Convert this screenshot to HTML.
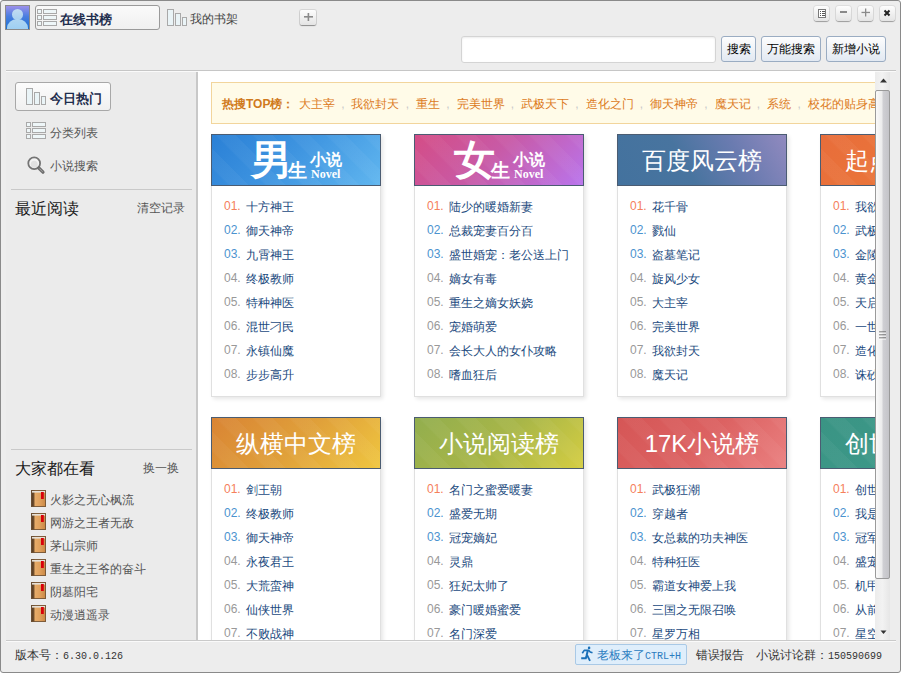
<!DOCTYPE html>
<html><head><meta charset="utf-8">
<style>
*{margin:0;padding:0;box-sizing:border-box}
html,body{width:901px;height:673px;overflow:hidden;background:#fff}
body{font-family:"Liberation Sans",sans-serif;font-size:12px;position:relative}
.win{position:absolute;left:0;top:0;width:901px;height:673px;background:#ededed;border:1px solid #8a8a8a;border-radius:3px;overflow:hidden}
.abs{position:absolute}
.avatar{left:4px;top:4px;width:25px;height:25px;border:1px solid #8a8a8a;background:linear-gradient(#9c90ea,#4a7ee0 45%,#1a70d0);overflow:hidden}
.avatar .hd1{position:absolute;left:5.5px;top:3px;width:11.5px;height:11px;border-radius:50%;background:linear-gradient(#c2dcf2,#a8d0f0)}
.avatar .bd1{position:absolute;left:1px;top:13px;width:21px;height:18px;border-radius:10px 10px 0 0/9px 9px 0 0;background:linear-gradient(#b0d6f2,#8fcaf5)}
.tab1{left:34px;top:4px;width:125px;height:25px;border:1px solid #9a9a9a;border-radius:3px;background:linear-gradient(#fafafa,#f0f0f0)}
.tabtxt{font-weight:bold;color:#1e2d4d;font-size:13px;line-height:15px}
.graytxt{color:#444}
.ctl{top:5px;width:15px;height:15px;border-radius:3px;background:linear-gradient(#fdfdfd,#e4e4e4);box-shadow:0 1px 1px rgba(0,0,0,.3),0 0 0 1px #dedede;}
.ctl svg{position:absolute;left:0;top:0}
.plusbtn{left:299px;top:9px;width:16px;height:15px;border-radius:2px;background:linear-gradient(#fdfdfd,#e4e4e4);box-shadow:0 1px 1px rgba(0,0,0,.35),0 0 0 1px #d6d6d6}
.search{left:460px;top:35px;width:255px;height:27px;border:1px solid #d4d4d4;border-radius:3px;background:#fff;box-shadow:inset 0 1px 2px rgba(0,0,0,.08)}
.btn{top:35px;height:26px;border:1px solid #9aacc2;border-radius:3px;background:linear-gradient(#fdfdfd,#e2e9f2);color:#000;font-size:12px;line-height:25px;text-align:center}
.hline{left:5px;top:69px;width:890px;height:1px;background:#c6c6c6}
.hline2{left:5px;top:70px;width:890px;height:1px;background:#fafafa}
.side{left:5px;top:71px;width:190px;height:568px;background:#ebebeb}
.vsep{left:195px;top:71px;width:2px;height:568px;background:#c8c8c8}
.content{left:197px;top:70px;width:677px;height:569px;background:#fff;overflow:hidden}
.sb{left:874px;top:71px;width:15px;height:568px;background:linear-gradient(90deg,#ececec,#f2f2f2 50%,#e6e6e6)}
.thumb{left:0px;top:18px;width:15px;height:489px;border:1px solid #9a9a9a;border-radius:2px;background:linear-gradient(90deg,#fafafa,#ececec 45%,#cfcfd3 55%,#c4c4c8)}
.sline{left:5px;top:639px;width:890px;height:1px;background:#cacaca}
.sline2{left:5px;top:640px;width:890px;height:1px;background:#fafafa}
.sbtn{left:14px;top:81px;width:96px;height:29px;border:1px solid #a8a8a8;border-radius:3px;background:linear-gradient(#fcfcfc,#f0f0f0)}
.sdiv{left:10px;width:181px;height:1px;background:#c9c9c9}
.bigt{font-size:16px;color:#1a1a1a;line-height:18px}
.smt{font-size:12px;color:#555;line-height:14px}
.bk{position:absolute;left:30px;height:17px;width:160px}
.bsvg{position:absolute;left:0;top:0}
.btx{position:absolute;left:19px;top:3px;color:#555;font-size:12px;line-height:14px;white-space:nowrap}
.hot{left:13px;top:11px;width:700px;height:42px;border:1px solid #f2d59c;background:#fffbe8}
.hotin{position:absolute;left:10px;top:14px;white-space:nowrap;color:#d9822b;font-size:12px;line-height:14px}
.hotin b{color:#d07a1c}
.hw{color:#dc7a22}
.cm{color:#c8c8c8;display:inline-block;margin:0 7px 0 6.2px}
.card{position:absolute;width:170px;height:263px;box-shadow:2px 2px 4px rgba(0,0,0,.10)}
.hd{position:absolute;left:0;top:0;width:170px;height:52px;border:1px solid #4b5c72;color:#fff;overflow:hidden}
.stripes{position:absolute;left:0;top:0;width:168px;height:50px;background:repeating-linear-gradient(45deg,rgba(255,255,255,0) 0 11px,rgba(255,255,255,.04) 13px 26px)}
.ht{position:absolute;left:0;top:1px;width:168px;text-align:center;font-size:24px;line-height:50px}
.h1{background:linear-gradient(135deg,#2a80d6 0%,#3e94e0 45%,#60b6ef 100%)}
.h2{background:linear-gradient(135deg,#d44d86 0%,#c85aa6 45%,#b974ec 100%)}
.h3{background:linear-gradient(60deg,#43729e 0%,#48749f 40%,#6a7bb0 70%,#918abf 100%)}
.h3 .stripes{display:none}
.h4{background:linear-gradient(135deg,#e86d3a 0%,#ea763a 60%,#ee8a3a 100%)}
.h5{background:linear-gradient(135deg,#d98434 0%,#e0a03a 50%,#efc640 100%)}
.h6{background:linear-gradient(135deg,#92ae4e 0%,#a8b648 50%,#d4cd42 100%)}
.h7{background:linear-gradient(135deg,#d55656 0%,#dc6262 50%,#ea8080 100%)}
.h8{background:linear-gradient(135deg,#3a9484 0%,#3c9888 50%,#48a898 100%)}
.lg1{position:absolute;left:39px;top:2px;font-family:"Liberation Serif",serif;font-weight:bold;font-size:41px;line-height:46px}
.lg2{position:absolute;left:76px;top:25px;font-weight:bold;font-size:19px;line-height:22px}
.lg3{position:absolute;left:98px;top:16px;font-weight:bold;font-size:16px;line-height:18px}
.lg4{position:absolute;left:99px;top:33px;font-family:"Liberation Serif",serif;font-weight:bold;font-size:12px;line-height:13px}
.bd{position:absolute;left:0;top:52px;width:170px;height:211px;border:1px solid #e0e0e0;border-top:none;background:#fff}
.it{position:absolute;left:12px;height:16px;white-space:nowrap;line-height:14px}
.num{display:inline-block;width:22px;font-size:12px;position:relative;top:-1px}
.n1{color:#f5805c}.n2{color:#4b93cf}.n3{color:#999}
.tt{color:#1b4a7e;font-size:12px}
.status{font-size:12px;color:#333;line-height:14px}
.boss{left:574px;top:643px;width:112px;height:21px;border:1px solid #a9c9e6;border-radius:2px;background:#dfeefb;color:#2a7cc0}
</style></head><body>
<svg width="0" height="0" style="position:absolute"><defs>
<linearGradient id="bookg" x1="0" y1="0" x2="1" y2="0"><stop offset="0.2" stop-color="#e8ae6c"/><stop offset="0.6" stop-color="#dfa05c"/><stop offset="1" stop-color="#c88644"/></linearGradient><linearGradient id="spineg" x1="0" y1="0" x2="1" y2="0"><stop offset="0" stop-color="#4a3420"/><stop offset="1" stop-color="#7a5530"/></linearGradient>
</defs></svg>
<div class="win">
  <div class="abs avatar"><div class="hd1"></div><div class="bd1"></div></div>
  <div class="abs tab1"></div>
  <svg class="abs" style="left:36px;top:8px" width="20" height="17" viewBox="0 0 20 17"><rect x="0.5" y="0.5" width="4" height="4" fill="#eef6f8" stroke="#a9a9a9"/><rect x="6.5" y="0.5" width="13" height="4" fill="#eef6f8" stroke="#a9a9a9"/><rect x="0.5" y="6.5" width="4" height="4" fill="#eef6f8" stroke="#a9a9a9"/><rect x="6.5" y="6.5" width="13" height="4" fill="#eef6f8" stroke="#a9a9a9"/><rect x="0.5" y="12.5" width="4" height="4" fill="#eef6f8" stroke="#a9a9a9"/><rect x="6.5" y="12.5" width="13" height="4" fill="#eef6f8" stroke="#a9a9a9"/></svg>
  <div class="abs tabtxt" style="left:59px;top:11px">在线书榜</div>
  <svg class="abs" style="left:166px;top:8px" width="20" height="17" viewBox="0 0 20 17"><rect x="0.5" y="0.5" width="6" height="16" fill="#eaf4f7" stroke="#a9a9a9"/><rect x="8.5" y="4.5" width="5" height="12" fill="#eaf4f7" stroke="#a9a9a9"/><rect x="15.5" y="8.5" width="4" height="8" fill="#eaf4f7" stroke="#a9a9a9"/></svg>
  <div class="abs graytxt" style="left:189px;top:11px;font-size:12px;line-height:14px">我的书架</div>
  <div class="abs plusbtn"><svg width="16" height="15"><rect x="4" y="6" width="9" height="1.6" fill="#8a8a8a"/><rect x="7.6" y="3" width="1.6" height="8" fill="#8a8a8a"/></svg></div>
  <div class="abs ctl" style="left:813px"><svg width="15" height="15"><rect x="4.5" y="3.5" width="7" height="8" fill="#fff" stroke="#7a7a7a"/><rect x="6" y="5" width="1" height="1" fill="#555"/><rect x="8" y="5" width="3" height="1" fill="#555"/><rect x="6" y="7" width="1" height="1" fill="#555"/><rect x="8" y="7" width="3" height="1" fill="#555"/><rect x="6" y="9" width="1" height="1" fill="#555"/><rect x="8" y="9" width="3" height="1" fill="#555"/></svg></div>
  <div class="abs ctl" style="left:835px"><svg width="15" height="15"><rect x="4" y="5" width="7" height="2" fill="#8a8a8a"/></svg></div>
  <div class="abs ctl" style="left:857px"><svg width="15" height="15"><rect x="3.5" y="5.8" width="8.5" height="1.3" fill="#8a8a8a"/><rect x="7" y="2.5" width="1.3" height="8" fill="#8a8a8a"/></svg></div>
  <div class="abs ctl" style="left:879px"><svg width="15" height="15"><path d="M4.5 4.5 L9.5 9.5 M9.5 4.5 L4.5 9.5" stroke="#222" stroke-width="2"/></svg></div>
  <div class="abs search"></div>
  <div class="abs btn" style="left:720px;width:35px">搜索</div>
  <div class="abs btn" style="left:760px;width:60px">万能搜索</div>
  <div class="abs btn" style="left:825px;width:60px">新增小说</div>
  <div class="abs hline"></div><div class="abs hline2"></div>
  <div class="abs side"></div>
  <div class="abs vsep"></div>
  <div class="abs sbtn"></div>
  <svg class="abs" style="left:25px;top:87px" width="20" height="17" viewBox="0 0 20 17"><rect x="0.5" y="0.5" width="6" height="16" fill="#eaf4f7" stroke="#a9a9a9"/><rect x="8.5" y="4.5" width="5" height="12" fill="#eaf4f7" stroke="#a9a9a9"/><rect x="15.5" y="8.5" width="4" height="8" fill="#eaf4f7" stroke="#a9a9a9"/></svg>
  <div class="abs tabtxt" style="left:49px;top:90px">今日热门</div>
  <svg class="abs" style="left:25px;top:121px" width="20" height="17" viewBox="0 0 20 17"><rect x="0.5" y="0.5" width="4" height="4" fill="#eef6f8" stroke="#a9a9a9"/><rect x="6.5" y="0.5" width="13" height="4" fill="#eef6f8" stroke="#a9a9a9"/><rect x="0.5" y="6.5" width="4" height="4" fill="#eef6f8" stroke="#a9a9a9"/><rect x="6.5" y="6.5" width="13" height="4" fill="#eef6f8" stroke="#a9a9a9"/><rect x="0.5" y="12.5" width="4" height="4" fill="#eef6f8" stroke="#a9a9a9"/><rect x="6.5" y="12.5" width="13" height="4" fill="#eef6f8" stroke="#a9a9a9"/></svg>
  <div class="abs smt" style="left:49px;top:125px">分类列表</div>
  <svg class="abs" style="left:25px;top:154px" width="20" height="20" viewBox="0 0 20 20"><circle cx="8.2" cy="8.3" r="5.9" fill="#f4f4f4" stroke="#747474" stroke-width="1.8"/><circle cx="8.2" cy="9.2" r="3.5" fill="#e2e2e2"/><path d="M12.8 13 L17 17.2" stroke="#6e6e6e" stroke-width="3.2" stroke-linecap="round"/><path d="M13.3 13.5 L16.6 16.8" stroke="#a8a8a8" stroke-width="1"/></svg>
  <div class="abs smt" style="left:49px;top:158px">小说搜索</div>
  <div class="abs sdiv" style="top:188px"></div>
  <div class="abs bigt" style="left:14px;top:199px">最近阅读</div>
  <div class="abs smt" style="left:136px;top:200px">清空记录</div>
  <div class="abs sdiv" style="top:448px"></div>
  <div class="abs bigt" style="left:14px;top:459px">大家都在看</div>
  <div class="abs smt" style="left:142px;top:460px">换一换</div>
  <div class="bk" style="top:489px"><svg class="bsvg" width="15" height="17" viewBox="0 0 15 17"><rect x="0" y="0" width="15" height="17" fill="url(#bookg)"/><rect x="0" y="0" width="3.5" height="17" fill="url(#spineg)"/><rect x="0.5" y="0.5" width="14" height="16" fill="none" stroke="#6e5236" stroke-opacity="0.85"/><rect x="1" y="1" width="13" height="1.6" fill="#e6e0d6"/><rect x="10" y="2" width="2.8" height="7" fill="#d8000a"/></svg><span class="btx">火影之无心枫流</span></div><div class="bk" style="top:512px"><svg class="bsvg" width="15" height="17" viewBox="0 0 15 17"><rect x="0" y="0" width="15" height="17" fill="url(#bookg)"/><rect x="0" y="0" width="3.5" height="17" fill="url(#spineg)"/><rect x="0.5" y="0.5" width="14" height="16" fill="none" stroke="#6e5236" stroke-opacity="0.85"/><rect x="1" y="1" width="13" height="1.6" fill="#e6e0d6"/><rect x="10" y="2" width="2.8" height="7" fill="#d8000a"/></svg><span class="btx">网游之王者无敌</span></div><div class="bk" style="top:535px"><svg class="bsvg" width="15" height="17" viewBox="0 0 15 17"><rect x="0" y="0" width="15" height="17" fill="url(#bookg)"/><rect x="0" y="0" width="3.5" height="17" fill="url(#spineg)"/><rect x="0.5" y="0.5" width="14" height="16" fill="none" stroke="#6e5236" stroke-opacity="0.85"/><rect x="1" y="1" width="13" height="1.6" fill="#e6e0d6"/><rect x="10" y="2" width="2.8" height="7" fill="#d8000a"/></svg><span class="btx">茅山宗师</span></div><div class="bk" style="top:558px"><svg class="bsvg" width="15" height="17" viewBox="0 0 15 17"><rect x="0" y="0" width="15" height="17" fill="url(#bookg)"/><rect x="0" y="0" width="3.5" height="17" fill="url(#spineg)"/><rect x="0.5" y="0.5" width="14" height="16" fill="none" stroke="#6e5236" stroke-opacity="0.85"/><rect x="1" y="1" width="13" height="1.6" fill="#e6e0d6"/><rect x="10" y="2" width="2.8" height="7" fill="#d8000a"/></svg><span class="btx">重生之王爷的奋斗</span></div><div class="bk" style="top:581px"><svg class="bsvg" width="15" height="17" viewBox="0 0 15 17"><rect x="0" y="0" width="15" height="17" fill="url(#bookg)"/><rect x="0" y="0" width="3.5" height="17" fill="url(#spineg)"/><rect x="0.5" y="0.5" width="14" height="16" fill="none" stroke="#6e5236" stroke-opacity="0.85"/><rect x="1" y="1" width="13" height="1.6" fill="#e6e0d6"/><rect x="10" y="2" width="2.8" height="7" fill="#d8000a"/></svg><span class="btx">阴墓阳宅</span></div><div class="bk" style="top:604px"><svg class="bsvg" width="15" height="17" viewBox="0 0 15 17"><rect x="0" y="0" width="15" height="17" fill="url(#bookg)"/><rect x="0" y="0" width="3.5" height="17" fill="url(#spineg)"/><rect x="0.5" y="0.5" width="14" height="16" fill="none" stroke="#6e5236" stroke-opacity="0.85"/><rect x="1" y="1" width="13" height="1.6" fill="#e6e0d6"/><rect x="10" y="2" width="2.8" height="7" fill="#d8000a"/></svg><span class="btx">动漫逍遥录</span></div>
  <div class="abs content">
    <div class="abs hot"><div class="hotin"><b style="margin-right:4.5px">热搜TOP榜：</b><span class="hw">大主宰</span><span class="cm">,</span><span class="hw">我欲封天</span><span class="cm">,</span><span class="hw">重生</span><span class="cm">,</span><span class="hw">完美世界</span><span class="cm">,</span><span class="hw">武极天下</span><span class="cm">,</span><span class="hw">造化之门</span><span class="cm">,</span><span class="hw">御天神帝</span><span class="cm">,</span><span class="hw">魔天记</span><span class="cm">,</span><span class="hw">系统</span><span class="cm">,</span><span class="hw">校花的贴身高手</span></div></div>
    <div class="card" style="left:13px;top:63px"><div class="hd h1"><i class="stripes"></i><span class="lg1">男</span><span class="lg2">生</span><span class="lg3">小说</span><span class="lg4">Novel</span></div><div class="bd"><div class="it" style="top:14px"><span class="num n1">01.</span><span class="tt">十方神王</span></div><div class="it" style="top:38px"><span class="num n2">02.</span><span class="tt">御天神帝</span></div><div class="it" style="top:62px"><span class="num n2">03.</span><span class="tt">九霄神王</span></div><div class="it" style="top:86px"><span class="num n3">04.</span><span class="tt">终极教师</span></div><div class="it" style="top:110px"><span class="num n3">05.</span><span class="tt">特种神医</span></div><div class="it" style="top:134px"><span class="num n3">06.</span><span class="tt">混世刁民</span></div><div class="it" style="top:158px"><span class="num n3">07.</span><span class="tt">永镇仙魔</span></div><div class="it" style="top:182px"><span class="num n3">08.</span><span class="tt">步步高升</span></div></div></div><div class="card" style="left:216px;top:63px"><div class="hd h2"><i class="stripes"></i><span class="lg1">女</span><span class="lg2">生</span><span class="lg3">小说</span><span class="lg4">Novel</span></div><div class="bd"><div class="it" style="top:14px"><span class="num n1">01.</span><span class="tt">陆少的暖婚新妻</span></div><div class="it" style="top:38px"><span class="num n2">02.</span><span class="tt">总裁宠妻百分百</span></div><div class="it" style="top:62px"><span class="num n2">03.</span><span class="tt">盛世婚宠：老公送上门</span></div><div class="it" style="top:86px"><span class="num n3">04.</span><span class="tt">嫡女有毒</span></div><div class="it" style="top:110px"><span class="num n3">05.</span><span class="tt">重生之嫡女妖娆</span></div><div class="it" style="top:134px"><span class="num n3">06.</span><span class="tt">宠婚萌爱</span></div><div class="it" style="top:158px"><span class="num n3">07.</span><span class="tt">会长大人的女仆攻略</span></div><div class="it" style="top:182px"><span class="num n3">08.</span><span class="tt">嗜血狂后</span></div></div></div><div class="card" style="left:419px;top:63px"><div class="hd h3"><i class="stripes"></i><span class="ht">百度风云榜</span></div><div class="bd"><div class="it" style="top:14px"><span class="num n1">01.</span><span class="tt">花千骨</span></div><div class="it" style="top:38px"><span class="num n2">02.</span><span class="tt">戮仙</span></div><div class="it" style="top:62px"><span class="num n2">03.</span><span class="tt">盗墓笔记</span></div><div class="it" style="top:86px"><span class="num n3">04.</span><span class="tt">旋风少女</span></div><div class="it" style="top:110px"><span class="num n3">05.</span><span class="tt">大主宰</span></div><div class="it" style="top:134px"><span class="num n3">06.</span><span class="tt">完美世界</span></div><div class="it" style="top:158px"><span class="num n3">07.</span><span class="tt">我欲封天</span></div><div class="it" style="top:182px"><span class="num n3">08.</span><span class="tt">魔天记</span></div></div></div><div class="card" style="left:622px;top:63px"><div class="hd h4"><i class="stripes"></i><span class="ht">起点中文榜</span></div><div class="bd"><div class="it" style="top:14px"><span class="num n1">01.</span><span class="tt">我欲封天</span></div><div class="it" style="top:38px"><span class="num n2">02.</span><span class="tt">武极天下</span></div><div class="it" style="top:62px"><span class="num n2">03.</span><span class="tt">金陵春</span></div><div class="it" style="top:86px"><span class="num n3">04.</span><span class="tt">黄金瞳</span></div><div class="it" style="top:110px"><span class="num n3">05.</span><span class="tt">天启之门</span></div><div class="it" style="top:134px"><span class="num n3">06.</span><span class="tt">一世之尊</span></div><div class="it" style="top:158px"><span class="num n3">07.</span><span class="tt">造化之门</span></div><div class="it" style="top:182px"><span class="num n3">08.</span><span class="tt">诛砂</span></div></div></div><div class="card" style="left:13px;top:346px"><div class="hd h5"><i class="stripes"></i><span class="ht">纵横中文榜</span></div><div class="bd"><div class="it" style="top:14px"><span class="num n1">01.</span><span class="tt">剑王朝</span></div><div class="it" style="top:38px"><span class="num n2">02.</span><span class="tt">终极教师</span></div><div class="it" style="top:62px"><span class="num n2">03.</span><span class="tt">御天神帝</span></div><div class="it" style="top:86px"><span class="num n3">04.</span><span class="tt">永夜君王</span></div><div class="it" style="top:110px"><span class="num n3">05.</span><span class="tt">大荒蛮神</span></div><div class="it" style="top:134px"><span class="num n3">06.</span><span class="tt">仙侠世界</span></div><div class="it" style="top:158px"><span class="num n3">07.</span><span class="tt">不败战神</span></div><div class="it" style="top:182px"><span class="num n3">08.</span><span class="tt">天骄战纪</span></div></div></div><div class="card" style="left:216px;top:346px"><div class="hd h6"><i class="stripes"></i><span class="ht">小说阅读榜</span></div><div class="bd"><div class="it" style="top:14px"><span class="num n1">01.</span><span class="tt">名门之蜜爱暖妻</span></div><div class="it" style="top:38px"><span class="num n2">02.</span><span class="tt">盛爱无期</span></div><div class="it" style="top:62px"><span class="num n2">03.</span><span class="tt">冠宠嫡妃</span></div><div class="it" style="top:86px"><span class="num n3">04.</span><span class="tt">灵鼎</span></div><div class="it" style="top:110px"><span class="num n3">05.</span><span class="tt">狂妃太帅了</span></div><div class="it" style="top:134px"><span class="num n3">06.</span><span class="tt">豪门暖婚蜜爱</span></div><div class="it" style="top:158px"><span class="num n3">07.</span><span class="tt">名门深爱</span></div><div class="it" style="top:182px"><span class="num n3">08.</span><span class="tt">重生之嫡女</span></div></div></div><div class="card" style="left:419px;top:346px"><div class="hd h7"><i class="stripes"></i><span class="ht">17K小说榜</span></div><div class="bd"><div class="it" style="top:14px"><span class="num n1">01.</span><span class="tt">武极狂潮</span></div><div class="it" style="top:38px"><span class="num n2">02.</span><span class="tt">穿越者</span></div><div class="it" style="top:62px"><span class="num n2">03.</span><span class="tt">女总裁的功夫神医</span></div><div class="it" style="top:86px"><span class="num n3">04.</span><span class="tt">特种狂医</span></div><div class="it" style="top:110px"><span class="num n3">05.</span><span class="tt">霸道女神爱上我</span></div><div class="it" style="top:134px"><span class="num n3">06.</span><span class="tt">三国之无限召唤</span></div><div class="it" style="top:158px"><span class="num n3">07.</span><span class="tt">星罗万相</span></div><div class="it" style="top:182px"><span class="num n3">08.</span><span class="tt">龙血战神</span></div></div></div><div class="card" style="left:622px;top:346px"><div class="hd h8"><i class="stripes"></i><span class="ht">创世中文榜</span></div><div class="bd"><div class="it" style="top:14px"><span class="num n1">01.</span><span class="tt">创世神尊</span></div><div class="it" style="top:38px"><span class="num n2">02.</span><span class="tt">我是大明星</span></div><div class="it" style="top:62px"><span class="num n2">03.</span><span class="tt">冠军之心</span></div><div class="it" style="top:86px"><span class="num n3">04.</span><span class="tt">盛宠之嫡女</span></div><div class="it" style="top:110px"><span class="num n3">05.</span><span class="tt">机甲战神</span></div><div class="it" style="top:134px"><span class="num n3">06.</span><span class="tt">从前有座灵剑山</span></div><div class="it" style="top:158px"><span class="num n3">07.</span><span class="tt">星空霸主</span></div><div class="it" style="top:182px"><span class="num n3">08.</span><span class="tt">天域苍穹</span></div></div></div>
  </div>
  <div class="abs sb"><svg class="abs" style="left:0;top:0" width="15" height="18"><path d="M5 10.5 L8.5 6.5 L12 10.5 Z" fill="#333"/></svg><div class="abs thumb"><svg class="abs" style="left:3px;top:240px" width="8" height="9"><rect x="0" y="0.5" width="7" height="1" fill="#555"/><rect x="0" y="3.5" width="7" height="1" fill="#555"/><rect x="0" y="6.5" width="7" height="1" fill="#555"/><rect x="0" y="1.5" width="7" height="1" fill="#fff"/><rect x="0" y="4.5" width="7" height="1" fill="#fff"/><rect x="0" y="7.5" width="7" height="1" fill="#fff"/></svg></div><svg class="abs" style="left:0;top:552px" width="15" height="16"><path d="M5.5 6.5 L11.5 6.5 L8.5 10 Z" fill="#333"/></svg></div>
  <div class="abs sline"></div><div class="abs sline2"></div>
  <div class="abs status" style="left:14px;top:647px">版本号：<span style="font-family:'Liberation Mono',monospace;font-size:10px">6.30.0.126</span></div>
  <div class="abs boss"><svg class="abs" style="left:2px;top:0px" width="18" height="18" viewBox="0 0 18 18"><circle cx="11.1" cy="2.9" r="1.3" fill="#1a70b8"/><path d="M4.3 8.3 L6.2 5.4 L10.7 5.4 L12.2 7 L14.5 7.8" stroke="#1a70b8" stroke-width="1.6" fill="none" stroke-linejoin="round"/><path d="M9.8 5.5 L8.6 10.5 L7.8 13.3 L3.2 13.3" stroke="#1a70b8" stroke-width="2" fill="none"/><path d="M9 10 L12 15.8" stroke="#1a70b8" stroke-width="1.8" fill="none"/></svg></div>
  <div class="abs status" style="left:596px;top:647px;color:#2a7cc0">老板来了<span style="font-family:'Liberation Mono',monospace;font-size:10px">CTRL+H</span></div>
  <div class="abs status" style="left:695px;top:647px">错误报告</div>
  <div class="abs status" style="left:755px;top:647px">小说讨论群：<span style="font-family:'Liberation Mono',monospace;font-size:10px">150590699</span></div>
</div>
</body></html>
